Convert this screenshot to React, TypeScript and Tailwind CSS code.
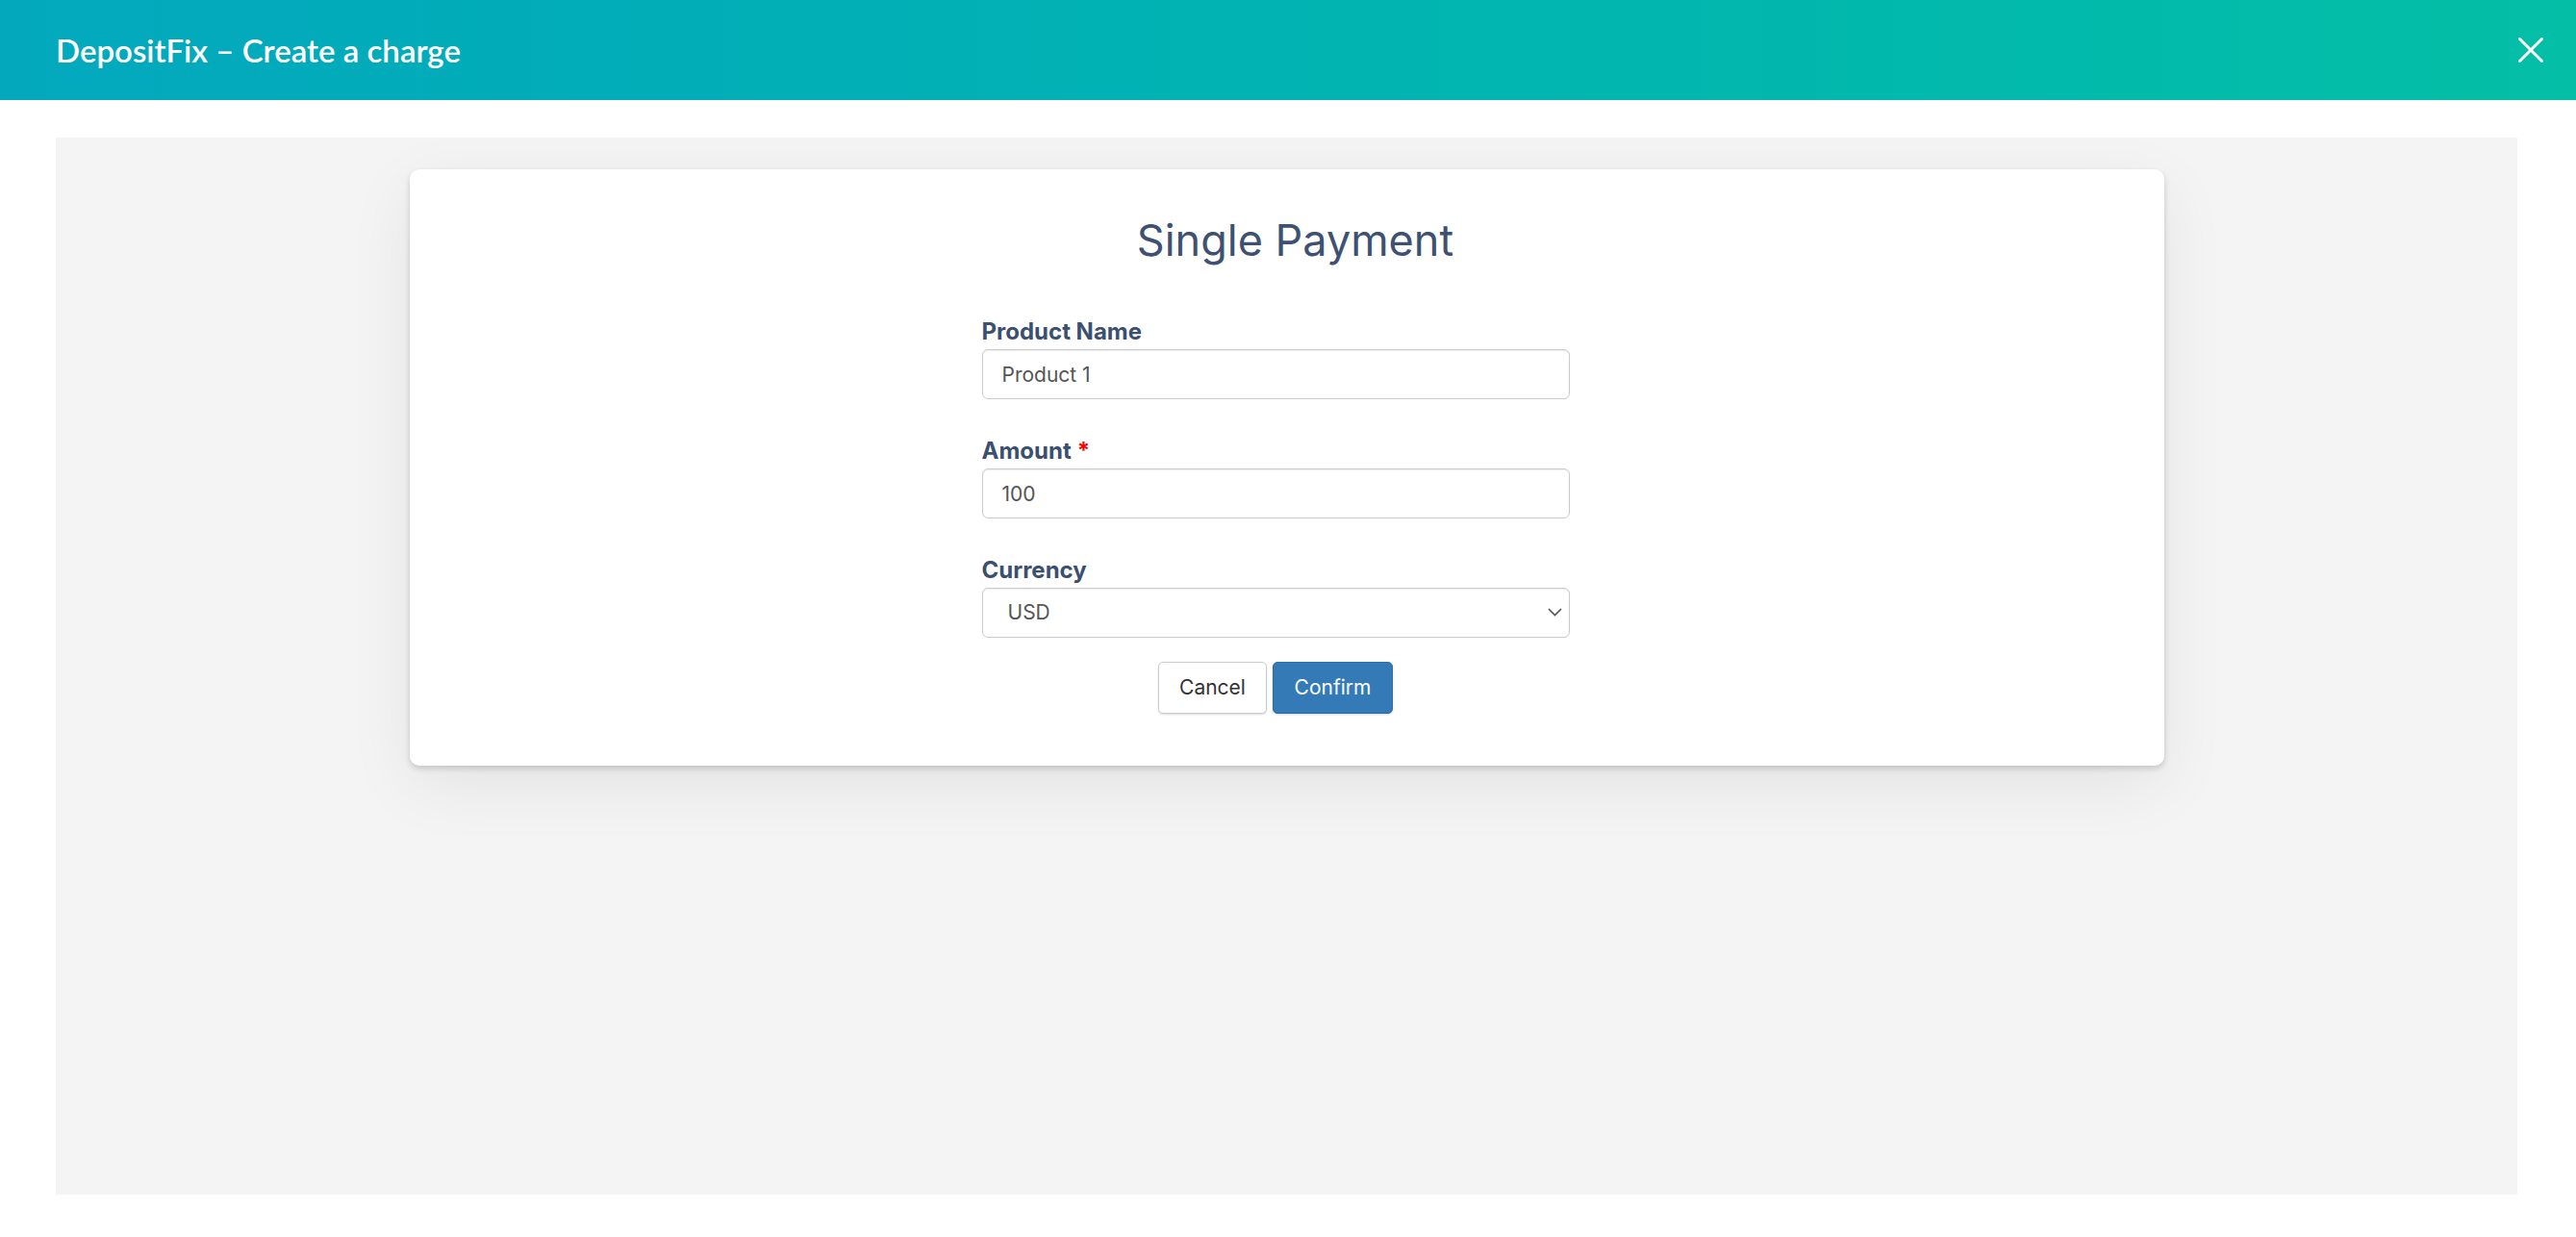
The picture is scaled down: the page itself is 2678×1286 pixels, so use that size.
export default function App() {
  return (
    <div className="min-h-screen bg-white">
      <Header />
      <main className="pt-[39px] pl-[58px] pr-[61px] pb-[44px]">
        <div className="h-[1099px] bg-[#f4f4f4] flex justify-center pt-[33px]">
          <ChargeCard />
        </div>
      </main>
    </div>
  );
}

function Header() {
  return (
    <header className="h-[104px] flex items-center justify-between pl-[58px] pr-[34px] bg-gradient-to-r from-[#03a8bd] to-[#04bea6]">
      <h1 className="font-['Lato',sans-serif] text-[33px] font-semibold text-white leading-none">
        DepositFix – Create a charge
      </h1>
      <button className="w-[26px] h-[26px] flex items-center justify-center" aria-label="Close">
        <svg width="26" height="26" viewBox="0 0 26 26" fill="none">
          <path d="M1.5 1.5L24.5 24.5M24.5 1.5L1.5 24.5" stroke="white" strokeWidth="3" strokeLinecap="round" />
        </svg>
      </button>
    </header>
  );
}

function ChargeCard() {
  return (
    <section className="w-[1824px] h-[620px] bg-white rounded-[10px] shadow-[0_20px_70px_rgba(0,0,0,0.07),0_3px_6px_rgba(0,0,0,0.16)] flex flex-col items-center pt-[45px] font-['Inter',sans-serif]">
      <h2 className="text-[45px] leading-[58px] font-normal text-[#3d5273] ml-[18px]">Single Payment</h2>

      <form className="w-[611px] mt-[52px] mr-[23px] flex flex-col">
        <Field label="Product Name">
          <input
            defaultValue="Product 1"
            className="w-full h-[52px] border border-[#cccccc] rounded-[6px] pl-[20px] text-[21px] text-[#555555] shadow-[inset_0_1px_1px_rgba(0,0,0,0.075)] outline-none"
          />
        </Field>
        <Field label="Amount" required>
          <input
            defaultValue="100"
            className="w-full h-[52px] border border-[#cccccc] rounded-[6px] pl-[20px] text-[21px] text-[#555555] shadow-[inset_0_1px_1px_rgba(0,0,0,0.075)] outline-none"
          />
        </Field>
        <div className="flex flex-col">
          <label className="text-[24px] leading-[28px] font-bold text-[#3b4f70] mb-[4px]">Currency</label>
          <div className="relative">
            <select
              defaultValue="USD"
              className="appearance-none w-full h-[52px] border border-[#cccccc] rounded-[6px] pl-[26px] text-[21px] text-[#555555] bg-white shadow-[inset_0_1px_1px_rgba(0,0,0,0.075)] outline-none"
            >
              <option>USD</option>
              <option>EUR</option>
              <option>GBP</option>
            </select>
            <svg
              className="absolute right-[8px] top-[21px] pointer-events-none"
              width="15"
              height="9"
              viewBox="0 0 15 9"
              fill="none"
            >
              <path d="M1 1L7.5 7.5L14 1" stroke="#555555" strokeWidth="1.6" />
            </svg>
          </div>
        </div>

        <div className="flex justify-center gap-[6px] mt-[25px]">
          <button
            type="button"
            className="w-[113px] h-[54px] rounded-[5px] bg-white border border-[#cccccc] text-[21px] text-[#333333] shadow-[0_1px_2px_rgba(0,0,0,0.15)]"
          >
            Cancel
          </button>
          <button
            type="button"
            className="w-[125px] h-[54px] rounded-[5px] bg-[#337ab7] border border-[#2e6da4] text-[21px] text-white shadow-[0_1px_2px_rgba(0,0,0,0.15)]"
          >
            Confirm
          </button>
        </div>
      </form>
    </section>
  );
}

function Field({ label, required, children }: { label: string; required?: boolean; children: React.ReactNode }) {
  return (
    <div className="flex flex-col mb-[40px]">
      <label className="text-[24px] leading-[28px] font-bold text-[#3b4f70] mb-[4px]">
        {label}
        {required && <span className="text-[#ff0000] ml-[6px]">*</span>}
      </label>
      {children}
    </div>
  );
}
